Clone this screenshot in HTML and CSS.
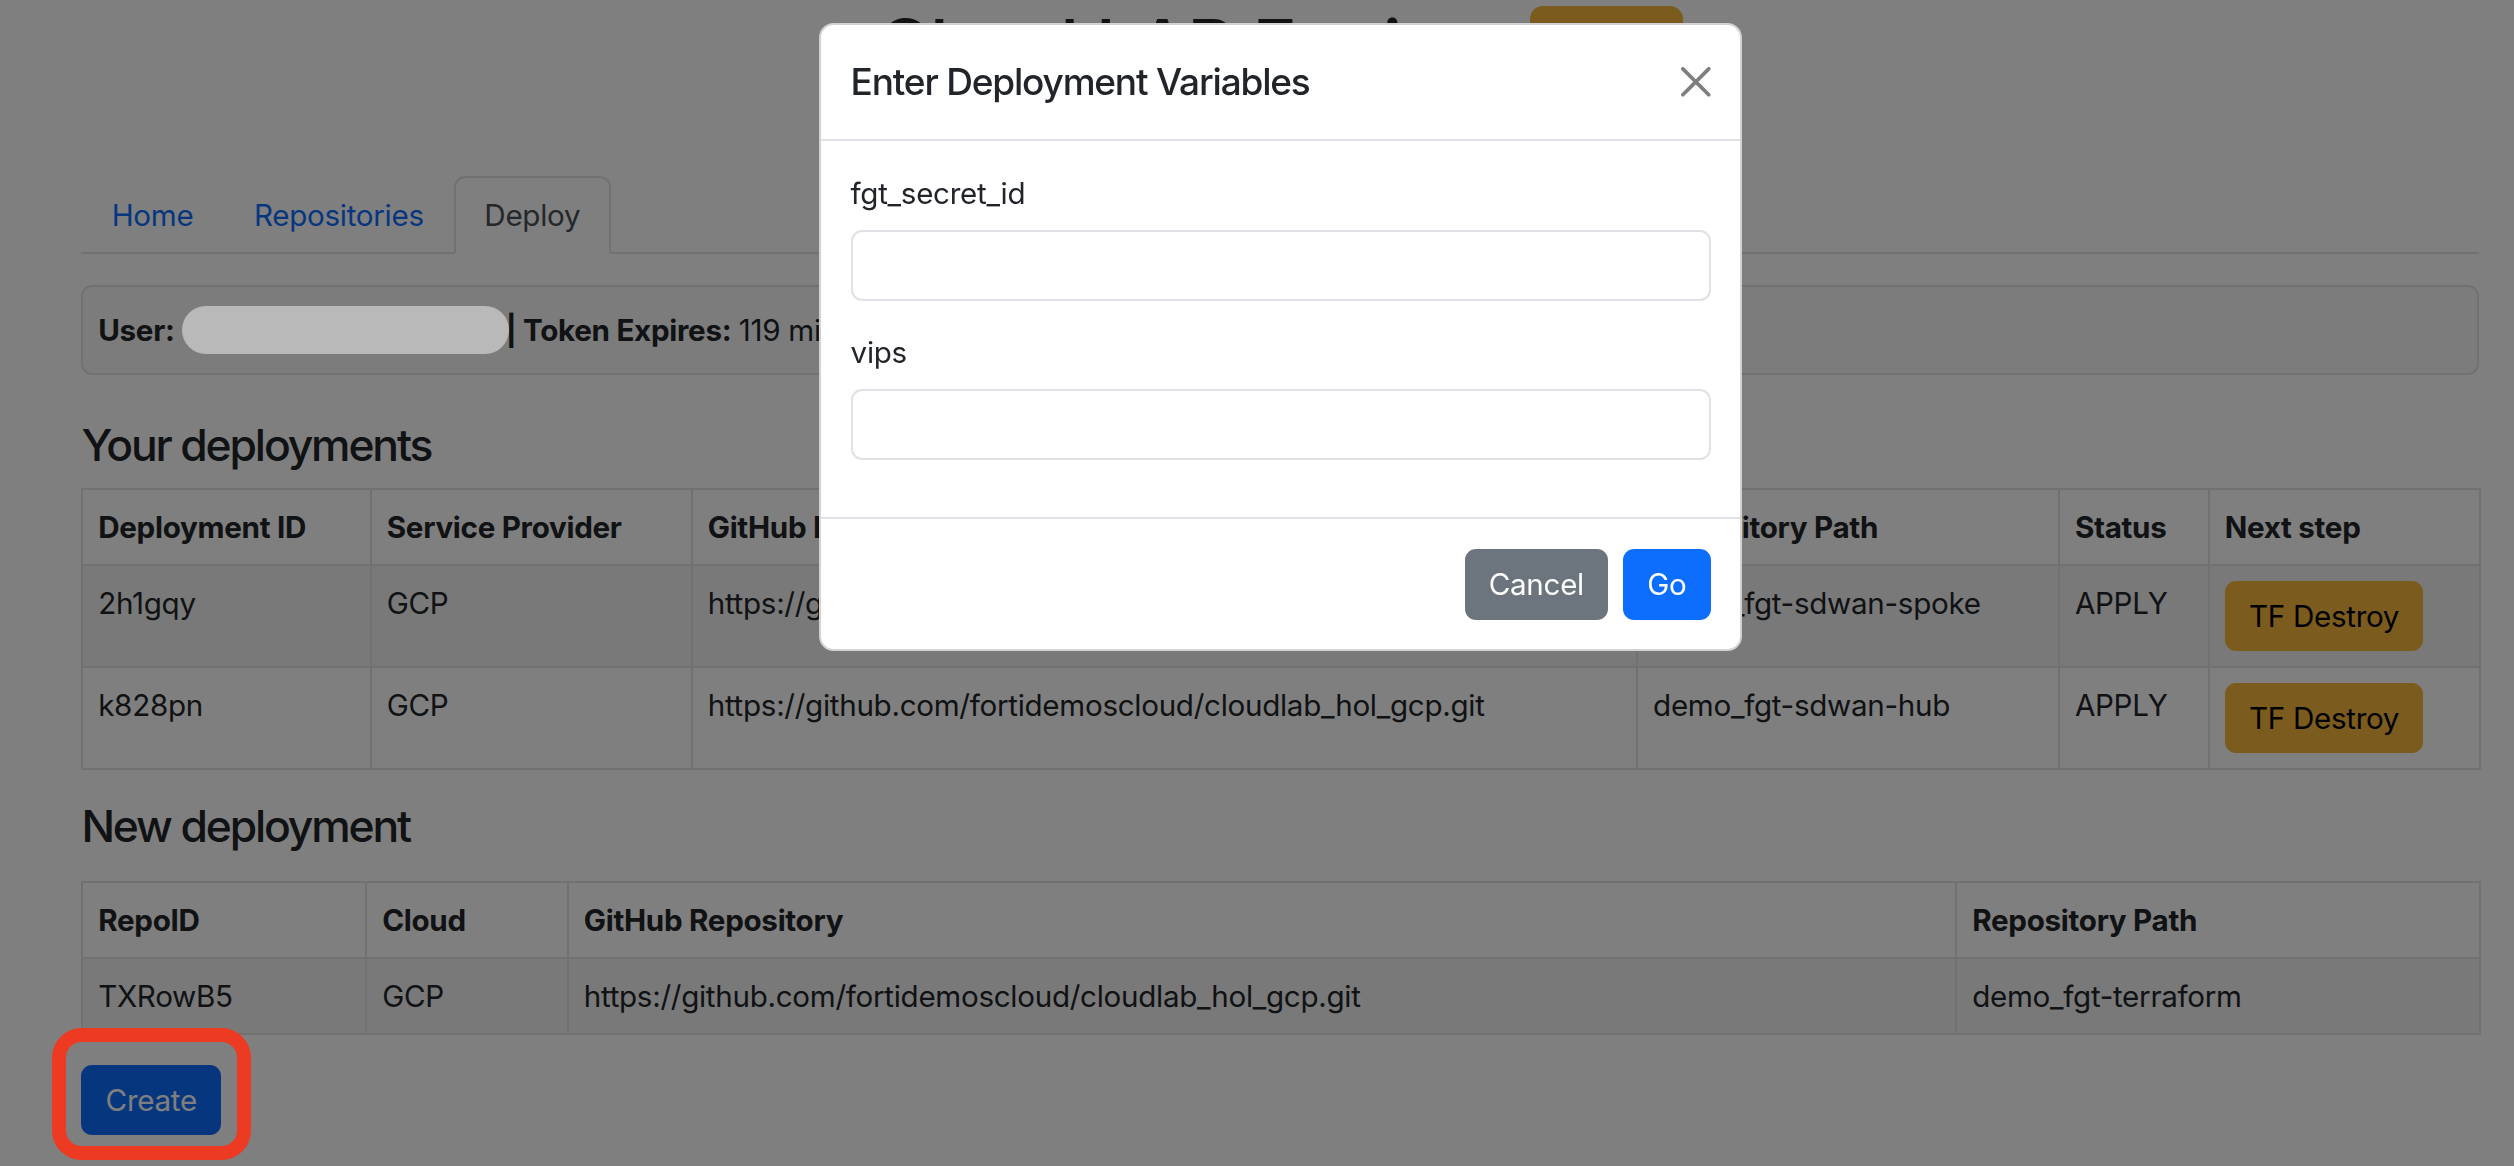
FILE: index.html
```html
<!DOCTYPE html>
<html lang="en">
<head>
<meta charset="utf-8">
<title>Cloud LAB Engine - Deploy</title>
<link rel="stylesheet" href="styles.css">
</head>
<body>
<div class="container">
  <header class="brand">
    <h1 class="brand-title">Cloud LAB Engine</h1>
    <span class="brand-badge">Beta</span>
  </header>

  <ul class="nav-tabs">
    <li><a class="nav-link" href="#">Home</a></li>
    <li><a class="nav-link" href="#">Repositories</a></li>
    <li><a class="nav-link active" href="#">Deploy</a></li>
  </ul>

  <div class="userbar">
    <strong>User:</strong>
    <span class="redact"></span>
    <strong class="sep">|&nbsp;Token Expires:</strong>
    <span class="expires">119 minutes</span>
  </div>

  <h4 class="section-title">Your deployments</h4>
  <table class="table">
    <colgroup>
      <col class="d-c1"><col class="d-c2"><col class="d-c3"><col class="d-c4"><col class="d-c5"><col class="d-c6">
    </colgroup>
    <thead>
      <tr><th>Deployment ID</th><th>Service Provider</th><th>GitHub Repository</th><th>Repository Path</th><th>Status</th><th>Next step</th></tr>
    </thead>
    <tbody>
      <tr>
        <td>2h1gqy</td><td>GCP</td><td>https://github.com/fortidemoscloud/cloudlab_hol_gcp.git</td><td>demo_fgt-sdwan-spoke</td><td>APPLY</td>
        <td><button class="btn btn-warning">TF Destroy</button></td>
      </tr>
      <tr>
        <td>k828pn</td><td>GCP</td><td>https://github.com/fortidemoscloud/cloudlab_hol_gcp.git</td><td>demo_fgt-sdwan-hub</td><td>APPLY</td>
        <td><button class="btn btn-warning">TF Destroy</button></td>
      </tr>
    </tbody>
  </table>

  <h4 class="section-title section-new">New deployment</h4>
  <table class="table">
    <colgroup>
      <col class="n-c1"><col class="n-c2"><col class="n-c3"><col class="n-c4">
    </colgroup>
    <thead>
      <tr><th>RepoID</th><th>Cloud</th><th>GitHub Repository</th><th>Repository Path</th></tr>
    </thead>
    <tbody>
      <tr><td>TXRowB5</td><td>GCP</td><td>https://github.com/fortidemoscloud/cloudlab_hol_gcp.git</td><td>demo_fgt-terraform</td></tr>
    </tbody>
  </table>

  <div class="create-wrap">
    <button class="btn btn-primary">Create</button>
    <span class="highlight"></span>
  </div>
</div>

<div class="backdrop"></div>

<div class="modal">
  <div class="modal-header">
    <h5 class="modal-title">Enter Deployment Variables</h5>
    <button class="btn-close" aria-label="Close">
      <svg viewBox="0 0 16 16" width="16" height="16"><path d="M.293.293a1 1 0 0 1 1.414 0L8 6.586 14.293.293a1 1 0 1 1 1.414 1.414L9.414 8l6.293 6.293a1 1 0 0 1-1.414 1.414L8 9.414l-6.293 6.293a1 1 0 0 1-1.414-1.414L6.586 8 .293 1.707a1 1 0 0 1 0-1.414z"/></svg>
    </button>
  </div>
  <div class="modal-body">
    <div class="field">
      <label class="field-label" for="v1">fgt_secret_id</label>
      <input class="form-control" id="v1" type="text">
    </div>
    <div class="field">
      <label class="field-label" for="v2">vips</label>
      <input class="form-control" id="v2" type="text">
    </div>
  </div>
  <div class="modal-footer">
    <button class="btn btn-secondary">Cancel</button>
    <button class="btn btn-primary">Go</button>
  </div>
</div>
</body>
</html>
```

FILE: styles.css
```css
html {
  zoom: 1.85;
  overflow: hidden;
}

* {
  box-sizing: border-box;
}

body {
  margin: 0;
  min-height: 640px;
  font-family: Inter, "Noto Sans", sans-serif;
  font-size: 16px;
  line-height: 1.5;
  color: #212529;
  background: #fff;
  letter-spacing: -0.01em;
}

.container {
  width: 1320px;
  min-height: 640px;
  margin-left: 32px;
  padding: 0 12px;
}

/* brand */
.brand {
  display: flex;
  justify-content: center;
  align-items: flex-start;
  height: 95.3px;
}

.brand-title {
  margin: 1px 0 0;
  font-size: 40px;
  font-weight: 500;
  line-height: 1.2;
  letter-spacing: -0.02em;
}

.brand-badge {
  margin: 3px 0 0 24px;
  width: 83px;
  height: 48px;
  padding-top: 12px;
  background: #f6b73c;
  border-radius: 7px;
  color: #000;
  font-size: 24px;
  font-weight: 700;
  line-height: 1;
  text-align: center;
}

/* tabs */
.nav-tabs {
  display: flex;
  list-style: none;
  margin: 0;
  padding: 0;
  border-bottom: 1.1px solid #dee2e6;
}

.nav-link {
  display: block;
  padding: 8px 15.3px;
  margin-bottom: -1.1px;
  border: 1.1px solid transparent;
  border-radius: 6px 6px 0 0;
  color: #0d6efd;
  text-decoration: none;
}

.nav-link.active {
  color: #495057;
  background: #fff;
  border-color: #dee2e6 #dee2e6 #fff;
}

/* user bar */
.userbar {
  margin-top: 16.5px;
  display: flex;
  align-items: center;
  padding: 10.6px 8px;
  background: #f8f9fa;
  border: 1.1px solid #dee2e6;
  border-radius: 6px;
  white-space: nowrap;
}

.redact {
  position: relative;
  z-index: 1100;
  display: inline-block;
  width: 177px;
  height: 25.5px;
  margin: 0 -2px 0 4px;
  background: #b9b9b9;
  border-radius: 13px;
}

.sep {
  margin-right: 4px;
}

/* headings */
.section-title {
  margin: 23.8px 0 8.3px;
  font-size: 24px;
  font-weight: 500;
  line-height: 1.2;
  letter-spacing: -0.048em;
}

.section-new {
  margin: 0.9px 0 15.3px;
}

/* tables */
.table {
  width: 1296px;
  table-layout: fixed;
  border-collapse: collapse;
  margin-bottom: 16px;
}

.table th,
.table td {
  padding: 8px;
  border: 1.1px solid #dee2e6;
  text-align: left;
  vertical-align: top;
  white-space: nowrap;
}

.table th {
  font-weight: 700;
}

.table tbody tr:nth-child(odd) {
  background: rgba(0, 0, 0, 0.05);
}

.d-c1 { width: 156px; }
.d-c2 { width: 173.5px; }
.d-c3 { width: 511px; }
.d-c4 { width: 228px; }
.d-c5 { width: 81px; }
.d-c6 { width: 146.5px; }

.n-c1 { width: 153.5px; }
.n-c2 { width: 109px; }
.n-c3 { width: 750.5px; }
.n-c4 { width: 283px; }

/* buttons */
.btn {
  display: inline-block;
  padding: 6px 12px;
  font-family: inherit;
  font-size: 16px;
  line-height: 1.5;
  letter-spacing: inherit;
  border: 1.1px solid transparent;
  border-radius: 6px;
  cursor: pointer;
}

.btn-warning {
  background: #f6b73c;
  border-color: #f6b73c;
  color: #000;
}

.btn-primary {
  background: #0d6efd;
  border-color: #0d6efd;
  color: #fff;
}

.btn-secondary {
  background: #6c757d;
  border-color: #6c757d;
  color: #fff;
}

.create-wrap {
  position: relative;
  margin-top: 0.5px;
}

.highlight {
  position: absolute;
  left: -16px;
  top: -20px;
  width: 107.6px;
  height: 71.4px;
  border: 7.6px solid #ec3b22;
  border-radius: 16px;
  z-index: 1100;
}

/* modal */
.backdrop {
  position: fixed;
  inset: 0;
  background: #000;
  opacity: 0.5;
  z-index: 1050;
}

.modal {
  position: fixed;
  top: 12.3px;
  left: 442.7px;
  width: 499px;
  z-index: 1055;
  background: #fff;
  border: 1.1px solid rgba(0, 0, 0, 0.175);
  border-radius: 8px;
}

.modal-header {
  display: flex;
  align-items: center;
  padding: 16px;
  border-bottom: 1.1px solid #dee2e6;
}

.modal-title {
  margin: 0;
  font-size: 20px;
  font-weight: 500;
  line-height: 1.5;
  letter-spacing: -0.032em;
}

.btn-close {
  box-sizing: content-box;
  width: 16px;
  height: 16px;
  padding: 8px;
  margin: -8px -8px -8px auto;
  border: 0;
  background: transparent;
  opacity: 0.5;
  cursor: pointer;
}

.btn-close svg {
  display: block;
  fill: #000;
}

.modal-body {
  padding: 16px 16px 15.3px;
}

.field {
  margin-bottom: 16px;
}

.field-label {
  display: block;
  margin-bottom: 8px;
}

.form-control {
  display: block;
  width: 100%;
  height: 38px;
  padding: 6px 12px;
  font: inherit;
  border: 1.1px solid #dee2e6;
  border-radius: 6px;
  background: #fff;
}

.modal-footer {
  display: flex;
  justify-content: flex-end;
  align-items: center;
  padding: 12px;
  border-top: 1.1px solid #dee2e6;
}

.modal-footer .btn {
  margin: 4px;
}
```
